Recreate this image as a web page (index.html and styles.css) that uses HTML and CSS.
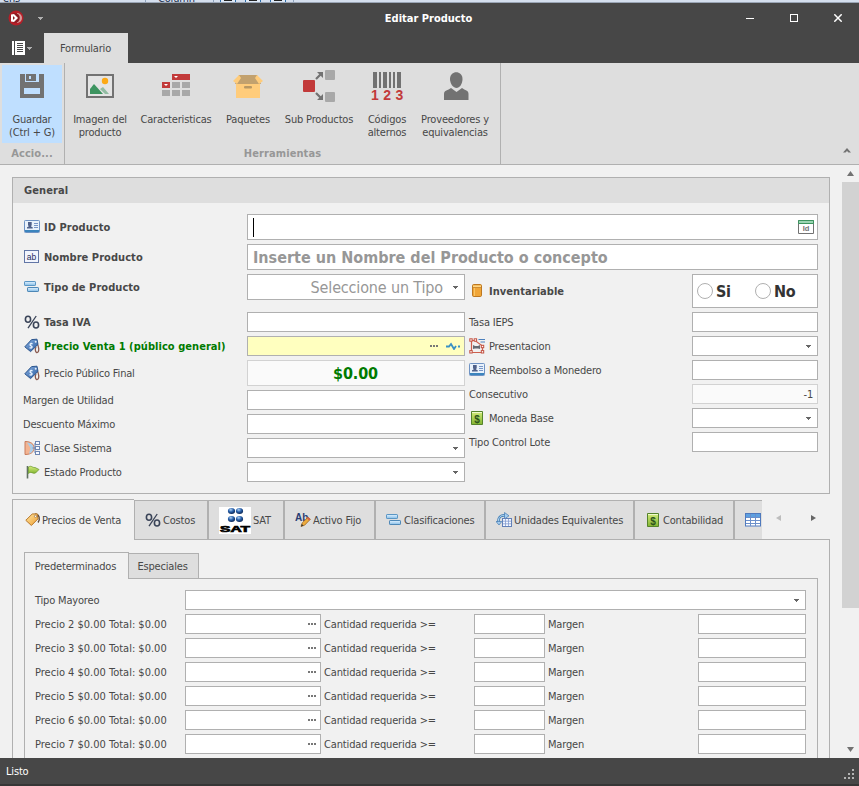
FILE: index.html
```html
<!DOCTYPE html>
<html lang="es">
<head>
<meta charset="utf-8">
<title>Editar Producto</title>
<link rel="stylesheet" href="styles.css">
</head>
<body>
<svg class="defs" width="0" height="0">
  <defs>
    <linearGradient id="gBlue" x1="0" y1="0" x2="0" y2="1"><stop offset="0" stop-color="#e2f2ff"/><stop offset="1" stop-color="#86bee8"/></linearGradient>
    <linearGradient id="gTag" x1="0" y1="0" x2="1" y2="1"><stop offset="0" stop-color="#8fb6e6"/><stop offset="1" stop-color="#24569c"/></linearGradient>
    <linearGradient id="gGold" x1="0" y1="0" x2="1" y2="1"><stop offset="0" stop-color="#ffe9a8"/><stop offset="1" stop-color="#ee9c2c"/></linearGradient>
    <linearGradient id="gGreen" x1="0" y1="0" x2="0" y2="1"><stop offset="0" stop-color="#d3ec7c"/><stop offset="1" stop-color="#82b431"/></linearGradient>
    <radialGradient id="gBall" cx=".4" cy=".3" r=".7"><stop offset="0" stop-color="#b4d4f4"/><stop offset=".5" stop-color="#2a62ac"/><stop offset="1" stop-color="#0b2552"/></radialGradient>
  </defs>
  <symbol id="card" viewBox="0 0 16 16">
    <rect x=".5" y="1.500" width="15" height="12" rx=".8" fill="#e9f2fc" stroke="#6f93c4"/>
    <path d="M1 11h14v2H1z" fill="#3b84bd"/>
    <path d="M3 9.500V8.300L4.700 7.500 4 6V3h3.700V6L7 7.500l1.700.8V9.500z" fill="#50618a"/>
    <path d="M10 4.500h4M10 6.500h4M10 8.500h4" stroke="#7895c6"/>
  </symbol>
  <symbol id="ab" viewBox="0 0 16 16">
    <rect x=".5" y="1.500" width="14" height="12" fill="#f2f5fd" stroke="#6276a6"/>
    <text x="7.500" y="10.500" text-anchor="middle" font-family="Liberation Sans" font-size="8.500" font-weight="400" letter-spacing="0" fill="#1f2c5c">ab</text>
  </symbol>
  <symbol id="bars" viewBox="0 0 16 16">
    <rect x=".5" y="2.500" width="11" height="4" rx=".6" fill="url(#gBlue)" stroke="#5a96c4"/>
    <rect x="3.500" y="8.500" width="11" height="4" rx=".6" fill="url(#gBlue)" stroke="#4d87b6"/>
  </symbol>
  <symbol id="percent" viewBox="0 0 16 16">
    <g fill="none" stroke="#3a4458" stroke-width="1.600"><ellipse cx="4" cy="5.200" rx="2.600" ry="3"/><ellipse cx="12" cy="11" rx="2.600" ry="3"/><path d="M12.200 2 4 14.200" stroke-width="1.300"/></g>
  </symbol>
  <symbol id="tagblue" viewBox="0 0 16 16">
    <path d="M12.600 5c3 3.500 2.500 9 .8 9.500S10.500 11.500 12 9" fill="none" stroke="#8a5a50" stroke-width="1.300"/>
    <path d="M.8 8.800 7.600 1.600 13 1.200l1 5.200-7.400 7.200z" fill="url(#gTag)" stroke="#2d568e"/>
    <path d="M8.500 5.800C6.500 4.800 5 7 7 7.800s1 3-1.500 1.800" fill="none" stroke="#eaf4ff" stroke-width="1.300"/>
    <circle cx="11.700" cy="3.700" r="1" fill="#e4edf8"/>
  </symbol>
  <symbol id="taggold" viewBox="0 0 16 16">
    <path d="M10 2c4.500.5 5.500 5 3 8.500" fill="none" stroke="#5c4a3e" stroke-width="1.400"/>
    <path d="M.8 8.300 7.200 2 12.200 1.800l.8 5L6.400 13.500z" fill="url(#gGold)" stroke="#b7772a"/>
    <circle cx="10.500" cy="4.300" r="1.100" fill="#fff" stroke="#785028" stroke-width=".5"/>
  </symbol>
  <symbol id="clase" viewBox="0 0 16 16">
    <path d="M1 1.500c6 0 9 2.500 9 6.500s-3 6.500-9 6.500z" fill="#f3b492" stroke="#c97c5c"/>
    <path d="M3 2.500c4 .5 6.500 2.500 6.500 5.500S7 13 5 13.700L6.500 8z" fill="#a9cdea"/>
    <path d="M8.500 8h2.500M11 3v10" stroke="#6e86b2" fill="none"/>
    <g fill="#f6f9ff" stroke="#6e86b2"><rect x="11.500" y="1.500" width="4" height="3"/><rect x="11.500" y="6.500" width="4" height="3"/><rect x="11.500" y="11.500" width="4" height="3"/></g>
  </symbol>
  <symbol id="flag" viewBox="0 0 16 16">
    <path d="M3.500 2v12.500" stroke="#607060" stroke-width="1.600"/>
    <path d="M4.500 3c3-2 4 1 6.500.5L15 5.500 11.500 9C9 10.200 7 6.800 4.500 9.500z" fill="url(#gGreen)" stroke="#6d9a30" stroke-width=".8"/>
  </symbol>
  <symbol id="barrel" viewBox="0 0 16 16">
    <rect x="3.500" y="1.500" width="9" height="12" rx="1.200" fill="#f0a537" stroke="#bd7821"/>
    <path d="M4 2.500h8v2H4z" fill="#ffd685"/><path d="M4 4.500h8" stroke="#bd7821" stroke-width=".7"/><path d="M5.500 5v8" stroke="#f8c566"/>
  </symbol>
  <symbol id="shape" viewBox="0 0 16 16">
    <path d="M2.500 2v12M2.500 2.500H6L13.500 8v6M2 14.500h12" fill="none" stroke="#cc604e" stroke-width="1.200"/>
    <g fill="#fff" stroke="#c25040"><rect x=".8" y=".8" width="2.400" height="2.400"/><rect x="5.200" y=".8" width="2.400" height="2.400"/><rect x="12.300" y="7.300" width="2.400" height="2.400"/><rect x=".8" y="12.600" width="2.400" height="2.400"/><rect x="12.300" y="12.600" width="2.400" height="2.400"/></g>
    <path d="M4 7l2 1h3l2-1v4l-2-.5H6L4 11z" fill="#656b73"/>
    <path d="M9.500 1.500H16M11.500 4H16" stroke="#4c80bc"/>
  </symbol>
  <symbol id="money" viewBox="0 0 16 16">
    <path d="M2.500 1.500h11v13h-11z" fill="url(#gGreen)" stroke="#55832b"/>
    <path d="M3 2.500h10" stroke="#eff9cc"/>
    <text x="8" y="12.500" text-anchor="middle" font-family="Liberation Sans" font-weight="700" font-size="10" letter-spacing="0" fill="#2c541c">$</text>
  </symbol>
  <symbol id="abpen" viewBox="0 0 16 16">
    <text x="0" y="8.500" font-family="Liberation Sans" font-weight="700" font-size="10" letter-spacing="0" fill="#293c72">Ab</text>
    <path d="M6 14.500l1.200-3.600L13 5.200l2.400 2-5.800 6z" fill="#edab3d" stroke="#9f6722" stroke-width=".8"/><path d="M6 14.500l.8-2.400 1.700 1.400z" fill="#333"/><path d="M13 5.200l2.400 2-1.200 1.200L12 6.300z" fill="#d05b50"/>
  </symbol>
  <symbol id="units" viewBox="0 0 16 16">
    <path d="M2.500 10C2 5 5 2.800 9.500 3.500" fill="none" stroke="#4682b8" stroke-width="2.600"/><path d="M2.500 10C2 5 5 2.800 9.500 3.500" fill="none" stroke="#bedcf4" stroke-width="1"/>
    <path d="M8.500.5 13 3.800 8.500 7zM0 9.500h5.800L3 13z" fill="#a5cdf0" stroke="#4078b0" stroke-width=".7"/>
    <rect x="6.500" y="6.500" width="9" height="8" fill="#f4f7ff" stroke="#6280b8"/><path d="M9.500 7v7M12.500 7v7M7 9.200h8M7 11.800h8" stroke="#839cd0" stroke-width=".8"/>
  </symbol>
  <symbol id="table" viewBox="0 0 16 16">
    <rect x=".5" y="1.500" width="15" height="12.500" fill="#fff" stroke="#4f79bd"/><path d="M1 2h14v3.500H1z" fill="#5d9fe0"/>
    <path d="M5.500 2v12M10.500 2v12M1 5.500h14M1 8.500h14M1 11.500h14" stroke="#6b8fca"/>
  </symbol>
  <symbol id="down" viewBox="0 0 5 3"><path d="M0 0h5v1H4v1H3v1H2V2H1V1H0z" fill="currentColor"/></symbol>
</svg>

<div class="window">
  <div class="backdrop"><span class="bd-a">ens</span><span class="bd-b">Column</span><span class="bd-sq"></span><span class="bd-sq"></span><span class="bd-sq"></span><span class="bd-end"></span></div>

  <header class="titlebar">
    <div class="quick">
      <svg width="16" height="16" viewBox="0 0 16 16"><circle cx="8" cy="8" r="7.500" fill="#b51f28"/><path d="M9 3a5 5 0 0 1 0 10z" fill="#d99a9a"/><circle cx="7" cy="8" r="4.800" fill="#8a1b22"/><path d="M3 4.500 6 4l4 4-4 4-3-.5z" fill="#fff"/><path d="M5 6 7 8l-2 2z" fill="#8c222a"/></svg>
      <svg class="caret" width="5" height="3"><use href="#down"/></svg>
    </div>
    <h1>Editar Producto</h1>
    <div class="winbtns">
      <svg width="8" height="8"><path d="M0 4.500h8" stroke="#fff"/></svg>
      <svg width="8" height="8"><rect x=".5" y=".5" width="7" height="7" fill="none" stroke="#fff"/></svg>
      <svg width="8" height="8"><path d="M.3.3l7.400 7.400M7.700.3.300 7.700" stroke="#fff" stroke-width="1.500"/></svg>
    </div>
  </header>

  <nav class="ribbon-tabs">
    <div class="appmenu">
      <svg width="13" height="14" viewBox="0 0 13 14"><path d="M0 0h2v14H0zM3 0h10v14H3z" fill="#fff"/><path d="M5 2.500h6M5 4.500h6M5 6.500h6M5 8.500h6M5 10.500h6" stroke="#484848"/></svg>
      <svg class="caret" width="5" height="3"><use href="#down"/></svg>
    </div>
    <div class="ribbon-tab">Formulario</div>
  </nav>

  <section class="ribbon">
    <div class="group g-actions">
      <div class="tools"><div class="tool save">
        <svg width="32" height="32" viewBox="0 0 32 32"><path d="M4 5h24v24H4z" fill="#727272"/><path d="M9 5h14v8H9zM8 19h16v6H8z" fill="#bfdfff"/><path d="M10 5h10v7H10z" fill="#727272"/><path d="M13 7h2v3h-2z" fill="#bfdfff"/></svg>
        <span>Guardar<br>(Ctrl + G)</span></div></div>
      <div class="caption">Accio...</div>
    </div>
    <div class="group g-tools">
      <div class="tools">
        <div class="tool t1"><svg width="32" height="32" viewBox="0 0 32 32"><path d="M3 6h26v22H3z" fill="#e4e4e4" stroke="#727272" stroke-width="2"/><path d="M6 25v-5l4-5 9 10z" fill="#3d9460"/><path d="M16 20l3-2 6 7h-4z" fill="#92bca3"/><circle cx="21" cy="12" r="3.200" fill="#fca915"/></svg><span>Imagen del<br>producto</span></div>
        <div class="tool t2"><svg width="32" height="32" viewBox="0 0 32 32"><path d="M12 5h18v6H12zM2 13h8v6H2z" fill="#c23a3a"/><path d="M12 13h8v6h-8zM22 13h8v6h-8zM2 21h8v6H2zM12 21h8v6h-8zM22 21h8v6h-8z" fill="#a8a8a8"/><path d="M14 7h4l-2 2zM4 15h4l-2 2z" fill="#fff"/></svg><span>Caracteristicas</span></div>
        <div class="tool t3"><svg width="32" height="32" viewBox="0 0 32 32"><path d="M7 6h18l4 9H3z" fill="#c2a16e"/><path d="M4 15h24v14H4z" fill="#ffcc7b"/><path d="M7 6 1 12l4 3 4-6zM25 6l6 6-4 3-4-6z" fill="#ffcc7b"/><rect x="12" y="17" width="8" height="2.500" rx="1" fill="#b89864"/></svg><span>Paquetes</span></div>
        <div class="tool t4"><svg width="32" height="32" viewBox="0 0 32 32"><rect y="11" width="12" height="12" rx="1" fill="#c23a3a"/><g fill="#a8a8a8"><rect x="22" y="1" width="10" height="10" rx="1"/><rect x="22" y="23" width="10" height="10" rx="1"/></g><path d="M13 10l5-5M13 24l5 5" stroke="#727272" stroke-width="2.200"/><path d="M14 3h6v6zM20 25v6h-6z" fill="#727272"/></svg><span>Sub Productos</span></div>
        <div class="tool t5"><svg width="32" height="32" viewBox="0 0 32 32"><path d="M2 3h4v16H2zM8 3h2v16H8zM12 3h4v16h-4zM18 3h2v16h-2zM22 3h2v16h-2zM26 3h4v16h-4z" fill="#727272"/><text x="0" y="31" font-family="Liberation Sans" font-weight="700" font-size="14" fill="#c23a3a" textLength="32">123</text></svg><span>Códigos<br>alternos</span></div>
        <div class="tool t6"><svg width="32" height="32" viewBox="0 0 32 32"><path d="M11 10c0-9 12.500-9 12.500 0 0 5-3 9-6 9S11 15 11 10z" fill="#727272"/><path d="M5 31v-6c0-4 4-3.500 7-6l5.500 4 5.500-4c3 2.500 6.500 2 6.500 6v6z" fill="#727272"/></svg><span>Proveedores y<br>equivalencias</span></div>
      </div>
      <div class="caption">Herramientas</div>
    </div>
    <svg class="collapse" width="8" height="5"><path d="M0 4.500h2.500L4 3l1.500 1.500H8L4 0z" fill="#727272"/></svg>
  </section>

  <main class="body">
    <div class="page">
      <section class="panel">
        <h2>General</h2>
        <div class="form">
          <div class="row tall b"><label><svg><use href="#card"/></svg>ID Producto</label><div class="field wide"><i class="cursor"></i>
            <svg class="idico" width="16" height="14" viewBox="0 0 16 14"><path d="M.5.500h15v13H.5z" fill="#fff" stroke="#727272"/><path d="M.5.500h15v3H.5z" fill="#9bd4b2" stroke="#3d9460"/><text x="8" y="11" text-anchor="middle" font-family="Liberation Sans" font-weight="700" font-size="7.500" fill="#727272">Id</text></svg></div></div>
          <div class="row tall b"><label><svg><use href="#ab"/></svg>Nombre Producto</label><div class="field wide big-b ph">Inserte un Nombre del Producto o concepto</div></div>
          <div class="cols">
            <div class="col left">
              <div class="row tall b gap12"><label><svg><use href="#bars"/></svg>Tipo de Producto</label><div class="field combo big ph"><span>Seleccione un Tipo</span><svg class="caret" width="5" height="3"><use href="#down"/></svg></div></div>
              <div class="row b"><label><svg><use href="#percent"/></svg>Tasa IVA</label><div class="field"></div></div>
              <div class="row b green"><label><svg><use href="#tagblue"/></svg>Precio Venta 1 (público general)</label><div class="field yellow"><i class="dots"></i><svg class="pulse" width="14" height="8"><path d="M0 4.500h3l2-2.500 3 5 2-3M12 4.500h2" fill="none" stroke="#3a92c4" stroke-width="1.800"/></svg></div></div>
              <div class="row tall"><label><svg><use href="#tagblue"/></svg>Precio Público Final</label><div class="field ro amount">$0.00</div></div>
              <div class="row"><label>Margen de Utilidad</label><div class="field"></div></div>
              <div class="row"><label>Descuento Máximo</label><div class="field"></div></div>
              <div class="row"><label><svg><use href="#clase"/></svg>Clase Sistema</label><div class="field combo"><svg class="caret" width="5" height="3"><use href="#down"/></svg></div></div>
              <div class="row"><label><svg><use href="#flag"/></svg>Estado Producto</label><div class="field combo"><svg class="caret" width="5" height="3"><use href="#down"/></svg></div></div>
            </div>
            <div class="col right">
              <div class="row radio b"><label><svg><use href="#barrel"/></svg>Inventariable</label><div class="field radios"><i></i><b>Si</b><i></i><b>No</b></div></div>
              <div class="row"><label>Tasa IEPS</label><div class="field"></div></div>
              <div class="row"><label><svg><use href="#shape"/></svg>Presentacion</label><div class="field combo"><svg class="caret" width="5" height="3"><use href="#down"/></svg></div></div>
              <div class="row"><label><svg><use href="#card"/></svg>Reembolso a Monedero</label><div class="field"></div></div>
              <div class="row"><label>Consecutivo</label><div class="field ro num">-1</div></div>
              <div class="row"><label><svg><use href="#money"/></svg>Moneda Base</label><div class="field combo"><svg class="caret" width="5" height="3"><use href="#down"/></svg></div></div>
              <div class="row"><label>Tipo Control Lote</label><div class="field"></div></div>
            </div>
          </div>
        </div>
      </section>

      <section class="tabs">
        <div class="strip">
          <div class="tab active w1"><svg><use href="#taggold"/></svg>Precios de Venta</div>
          <div class="tab w2"><svg><use href="#percent"/></svg>Costos</div>
          <div class="tab w3"><svg class="sat" viewBox="0 0 32 27"><path d="M0 0h32v27H0z" fill="#fff"/><g fill="url(#gBall)"><ellipse cx="12.500" cy="4" rx="3.600" ry="3"/><ellipse cx="20.500" cy="4" rx="3.600" ry="3"/><ellipse cx="12.500" cy="12" rx="3.600" ry="3"/><ellipse cx="20.500" cy="12" rx="3.600" ry="3"/></g><text x="1" y="25" font-family="Liberation Sans" font-weight="700" font-size="9.500" letter-spacing="0" stroke="#000" stroke-width=".7" textLength="30" lengthAdjust="spacingAndGlyphs">SAT</text></svg>SAT</div>
          <div class="tab w4"><svg><use href="#abpen"/></svg>Activo Fijo</div>
          <div class="tab w5"><svg><use href="#bars"/></svg>Clasificaciones</div>
          <div class="tab w6"><svg><use href="#units"/></svg>Unidades Equivalentes</div>
          <div class="tab w7"><svg><use href="#money"/></svg>Contabilidad</div>
          <div class="tab w8"><svg><use href="#table"/></svg></div>
          <div class="arrows"><svg width="5" height="6"><path d="M5 0v6L0 3z" fill="#bdbdbd"/></svg><svg width="5" height="6"><path d="M0 0v6l5-3z" fill="#666"/></svg></div>
        </div>
        <div class="pane">
          <div class="substrip"><div class="sub active">Predeterminados</div><div class="sub">Especiales</div></div>
          <div class="subpane">
            <div class="prow"><span class="c1">Tipo Mayoreo</span><div class="field combo grow"><svg class="caret" width="5" height="3"><use href="#down"/></svg></div></div>
            <div class="prow"><span class="c1 price">Precio 2 $0.00 Total: $0.00</span><div class="field f1"><i class="dots"></i></div><span class="c2">Cantidad requerida &gt;=</span><div class="field f2"></div><span class="c3">Margen</span><div class="field f3"></div></div>
            <div class="prow"><span class="c1 price">Precio 3 $0.00 Total: $0.00</span><div class="field f1"><i class="dots"></i></div><span class="c2">Cantidad requerida &gt;=</span><div class="field f2"></div><span class="c3">Margen</span><div class="field f3"></div></div>
            <div class="prow"><span class="c1 price">Precio 4 $0.00 Total: $0.00</span><div class="field f1"><i class="dots"></i></div><span class="c2">Cantidad requerida &gt;=</span><div class="field f2"></div><span class="c3">Margen</span><div class="field f3"></div></div>
            <div class="prow"><span class="c1 price">Precio 5 $0.00 Total: $0.00</span><div class="field f1"><i class="dots"></i></div><span class="c2">Cantidad requerida &gt;=</span><div class="field f2"></div><span class="c3">Margen</span><div class="field f3"></div></div>
            <div class="prow"><span class="c1 price">Precio 6 $0.00 Total: $0.00</span><div class="field f1"><i class="dots"></i></div><span class="c2">Cantidad requerida &gt;=</span><div class="field f2"></div><span class="c3">Margen</span><div class="field f3"></div></div>
            <div class="prow"><span class="c1 price">Precio 7 $0.00 Total: $0.00</span><div class="field f1"><i class="dots"></i></div><span class="c2">Cantidad requerida &gt;=</span><div class="field f2"></div><span class="c3">Margen</span><div class="field f3"></div></div>
          </div>
        </div>
      </section>
    </div>
    <div class="scroll">
      <svg width="7" height="5"><path d="M0 5h7L3.500 0z" fill="#727272"/></svg>
      <div class="thumb"></div>
      <svg width="7" height="5"><path d="M0 0h7L3.500 5z" fill="#727272"/></svg>
    </div>
  </main>

  <footer class="status"><span>Listo</span>
    <svg width="10" height="10" fill="#b4b4b4"><path d="M8 0h2v2H8zM4 4h2v2H4zM8 4h2v2H8zM0 8h2v2H0zM4 8h2v2H4zM8 8h2v2H8z"/></svg>
  </footer>
</div>
</body>
</html>
```
FILE: styles.css
```css
* { box-sizing: border-box; }
body {
  margin: 0;
  font: 11px/13px "DejaVu Sans Condensed", "DejaVu Sans", sans-serif;
  font-stretch: condensed;
  letter-spacing: -0.18px;
  color: #484848;
  background: #f1f1f1;
}
.defs { position: absolute; visibility: hidden; }
svg { flex: none; display: block; }
.window { width: 859px; height: 786px; display: flex; flex-direction: column; overflow: hidden; }

.backdrop { height: 3px; flex: none; background: #d5dfee; border-bottom: 1px solid #9aa5b5; display: flex; overflow: hidden; color: #1c3050; line-height: 3px; }
.bd-a { width: 146px; padding-left: 3px; margin-top: -3px; border-right: 1px solid #8fa3bd; }
.bd-b { width: 68px; padding-left: 12px; margin-top: -3px; border-right: 1px solid #8fa3bd; }
.bd-sq { width: 16px; height: 3px; margin-left: 6px; margin-right: 3px; border: solid #2d6da8; border-width: 0 1px; background: linear-gradient(#222, #222) center 0 / 8px 1px no-repeat #dfe9f6; }
.bd-end { border-left: 1px solid #8fa3bd; margin-left: 4px; }

.titlebar { height: 30px; flex: none; background: #474747; display: grid; grid-template-columns: 1fr auto 1fr; align-items: center; color: #fff; }
.titlebar h1 { margin: 0; padding-right: 2px; font-size: 11px; font-weight: 700; letter-spacing: 0; }
.quick { display: flex; align-items: center; gap: 14px; padding-left: 8px; }
.quick .caret, .appmenu .caret { color: #b0b0b0; }
.winbtns { display: flex; justify-content: flex-end; gap: 36px; padding-right: 17px; }

.ribbon-tabs { height: 30px; flex: none; background: #474747; display: flex; }
.appmenu { width: 44px; padding-left: 12px; display: flex; align-items: center; gap: 2px; }
.ribbon-tab { width: 84px; background: #dedede; text-align: center; line-height: 31px; padding-right: 1px; }

.ribbon { height: 102px; flex: none; background: #dedede; border-bottom: 1px solid #b0b0b0; display: flex; position: relative; }
.group { border-right: 1px solid #b0b0b0; display: flex; flex-direction: column; padding-top: 2px; }
.g-actions { width: 65px; }
.g-tools { width: 436px; }
.tools { display: flex; flex: none; height: 78px; padding-left: 2px; }
.tool { display: flex; flex-direction: column; align-items: center; text-align: center; padding-top: 4px; white-space: nowrap; }
.tool svg { margin-bottom: 12px; overflow: visible; }
.save { width: 60px; background: #bfdfff; }
.t1 { width: 66px; } .t2 { width: 86px; } .t3 { width: 58px; } .t4 { width: 84px; } .t5 { width: 52px; } .t6 { width: 84px; }
.caption { text-align: center; font-weight: 700; color: #979797; line-height: 21px; letter-spacing: 0.1px; }
.collapse { position: absolute; right: 8px; bottom: 11px; }

.body { flex: 1; min-height: 0; display: flex; justify-content: space-between; overflow: hidden; }
.page { width: 818px; margin-left: 12px; padding-top: 12px; }
.scroll { width: 17px; display: flex; flex-direction: column; align-items: center; padding: 6px 0 6px; }
.thumb { width: 17px; height: 426px; margin-top: 6px; margin-bottom: auto; background: #d2d2d2; }

.panel { height: 317px; border: 1px solid #b0b0b0; }
.panel h2 { margin: 0; height: 25px; padding-left: 11px; font-size: 11px; line-height: 25px; background: #dedede; letter-spacing: 0.1px; }
.form { padding: 11px 11px 0 10px; display: flex; flex-direction: column; gap: 4px; }
.cols { display: flex; gap: 4px; }
.col { display: flex; flex-direction: column; gap: 4px; }
.left { width: 442px; } .right { width: 349px; }
.row { display: flex; height: 20px; justify-content: space-between; }
.row.tall { height: 26px; }
.row.radio { height: 34px; }
.row.gap12 { margin-bottom: 8px; }
.row label { display: flex; align-items: center; gap: 4px; white-space: nowrap; }
.row label svg { width: 16px; height: 16px; margin-left: 1px; }
.right .row label svg { margin: 0; }
.row.b label { font-weight: 700; letter-spacing: 0.05px; }
.green label { color: #007a00; }
.field { background: #fff; border: 1px solid #b0b0b0; height: 100%; display: flex; align-items: center; white-space: nowrap; }
.wide { width: 571px; }
.left .field { width: 218px; }
.right .field { width: 126px; }
.combo { justify-content: flex-end; padding-right: 6px; color: #666; }
.ph { color: #979797; }
.big-b { font-size: 16px; font-weight: 700; padding-left: 5px; letter-spacing: 0; }
.big { font-size: 16px; letter-spacing: -0.15px; }
.big .caret { margin-left: 10px; color: #666; }
.cursor { width: 1px; height: 19px; background: #000; margin-left: 5px; }
.idico { margin-left: auto; margin-right: 3px; }
.yellow { background: #ffffbf; justify-content: flex-end; padding-right: 4px; gap: 8px; }
.dots { width: 8px; height: 2px; margin-bottom: 1px; background: repeating-linear-gradient(90deg, #777 0 2px, transparent 2px 3px); }
.ro { background: #fafafa; border-color: #d2d2d2; }
.amount { justify-content: center; font-size: 16px; font-weight: 700; color: #007a00; letter-spacing: -0.1px; padding-right: 1px; }
.num { justify-content: flex-end; padding-right: 4px; }
.radios { padding-left: 4px; color: #333; }
.radios i { width: 16px; height: 16px; border: 1px solid #b0b0b0; border-radius: 50%; margin-right: 3px; }
.radios b { font-size: 16px; width: 39px; letter-spacing: -0.3px; }

.tabs { margin-top: 5px; }
.strip { display: flex; height: 41px; align-items: flex-start; }
.tab { height: 40px; margin-top: 1px; background: #dedede; border: 1px solid #b0b0b0; display: flex; align-items: center; white-space: nowrap; gap: 2px; padding-left: 10px; overflow: hidden; }
.tab svg { width: 16px; height: 16px; }
.tab svg.sat { width: 32px; height: 27px; }
.tab.active { height: 41px; margin-top: 0; padding-left: 12px; gap: 1px; background: #f1f1f1; border-bottom: 0; border-right: 0; }
.w1 { width: 122px; } .w2 { width: 74px; } .w3 { width: 76px; } .w4 { width: 91px; } .w5 { width: 110px; } .w6 { width: 149px; } .w7 { width: 100px; } .w8 { width: 28px; border-right: 0; }
.arrows { flex: 1; align-self: stretch; border-bottom: 1px solid #b0b0b0; display: flex; gap: 30px; padding: 16px 0 0 14px; }
.pane { height: 300px; border: solid #b0b0b0; border-width: 0 1px; padding: 12px 11px 0; }
.substrip { display: flex; height: 27px; }
.substrip::after { content: ""; flex: 1; border-bottom: 1px solid #b0b0b0; }
.sub { width: 70px; height: 26px; margin-top: 1px; border: 1px solid #b0b0b0; border-left: 0; background: #dedede; text-align: center; line-height: 25px; padding-right: 2px; }
.sub.active { width: 105px; height: 27px; margin: 0; border-left: 1px solid #b0b0b0; border-bottom: 0; background: #f1f1f1; line-height: 27px; }
.subpane { height: 260px; border: solid #b0b0b0; border-width: 0 1px; padding: 11px 11px 0 10px; display: flex; flex-direction: column; gap: 4px; }
.prow { display: flex; height: 20px; align-items: center; white-space: nowrap; flex: none; }
.c1 { width: 150px; } .c2 { width: 153px; padding-left: 3px; letter-spacing: -0.15px; } .c3 { width: 153px; padding-left: 3px; }
.price { letter-spacing: 0; }
.grow { flex: 1; }
.f1 { width: 136px; justify-content: flex-end; padding-right: 4px; } .f2 { width: 71px; } .f3 { width: 108px; }

.status { height: 28px; flex: none; background: #474747; border-bottom: 2px solid #363636; color: #fff; display: flex; align-items: center; justify-content: space-between; padding: 0 5px 0 6px; }
.status svg { align-self: flex-end; margin-bottom: 5px; }
```
